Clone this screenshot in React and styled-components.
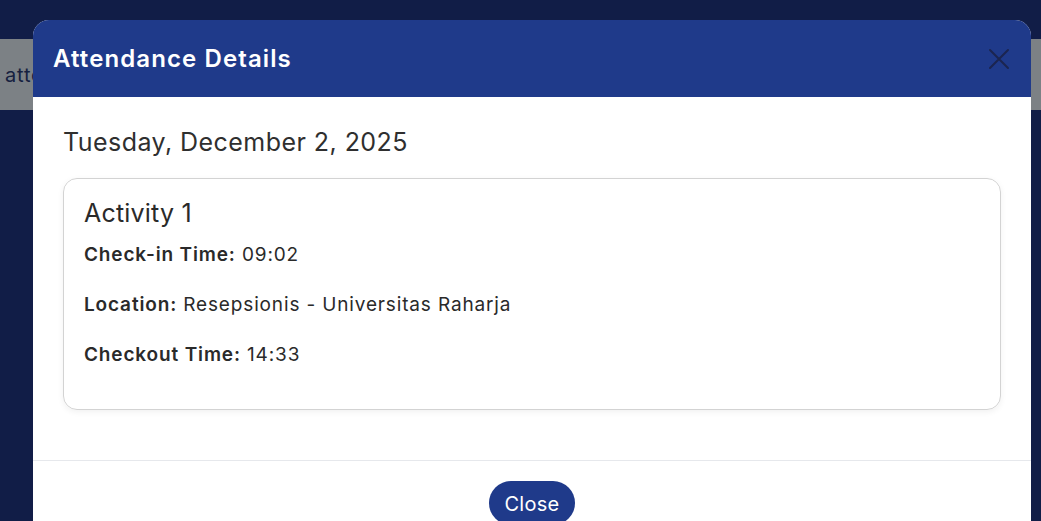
import styled, { createGlobalStyle } from 'styled-components';

const GlobalStyle = createGlobalStyle`
    html, body {
        margin: 0;
        padding: 0;
        height: 100%;
        overflow: hidden;
        background: #111d47;
        font-family: Inter, "Open Sans", sans-serif;
    }
`;

let Backdrop = styled.div`
    position: relative;
    width: 100%;
    height: 100vh;
    padding-top: 39px;
    box-sizing: border-box;
    background: #111d47;
`;

let PageBar = styled.div`
    height: 71px;
    background: #7c8185;
    display: flex;
    align-items: center;
    padding-left: 5px;
    font-size: 20px;
    letter-spacing: 0.8px;
    color: #15203f;
`;

let Modal = styled.div`
    position: absolute;
    top: 20px;
    left: 33px;
    width: 998px;
    background: #fff;
    border-radius: 16px 16px 0 0;
    overflow: hidden;
`;

let Header = styled.header`
    height: 77px;
    background: #1f3a8a;
    display: flex;
    align-items: center;
    justify-content: space-between;
    padding: 0 20px;
`;

let Title = styled.h2`
    margin: 0;
    color: #fff;
    font-size: 24px;
    font-weight: 600;
    letter-spacing: 1.1px;
`;

let CloseIcon = styled.button`
    border: 0;
    background: none;
    padding: 0;
    width: 24px;
    height: 24px;
    display: flex;
    align-items: center;
    justify-content: center;
    cursor: pointer;
`;

let Body = styled.div`
    padding: 31px 30px 50px;
`;

let DateLine = styled.h3`
    margin: 0 0 21px;
    font-size: 25px;
    font-weight: 400;
    line-height: 29px;
    letter-spacing: 0.45px;
    color: #2f2f2f;
`;

let Card = styled.div`
    border: 1px solid #d3d3d3;
    border-radius: 14px;
    box-shadow: 0 2px 6px rgba(0, 0, 0, 0.06);
    padding: 20px;
`;

let CardTitle = styled.h4`
    margin: 0 0 13px;
    font-size: 25px;
    font-weight: 400;
    line-height: 29px;
    letter-spacing: 0.2px;
    color: #2a2a2a;
`;

let Row = styled.p`
    margin: 0 0 23px;
    font-size: 19px;
    line-height: 27px;
    letter-spacing: 0.85px;
    color: #2a2a2a;

    &:last-child {
        margin-bottom: 21px;
    }

    strong {
        font-weight: 600;
    }
`;

let Footer = styled.footer`
    border-top: 1px solid #e6e8ec;
    padding: 20px 0;
    display: flex;
    justify-content: center;
`;

let Button = styled.button`
    background: #1f3a8a;
    color: #fff;
    border: 0;
    border-radius: 22px;
    height: 44px;
    padding: 2px 15px 0;
    font-family: inherit;
    font-size: 20px;
    letter-spacing: 0.3px;
`;

const rows = [
    ['Check-in Time:', '09:02'],
    ['Location:', 'Resepsionis - Universitas Raharja'],
    ['Checkout Time:', '14:33'],
];

function App() {
    return (
        <>
            <GlobalStyle />
            <Backdrop>
                <PageBar>attendance</PageBar>
                <Modal>
                    <Header>
                        <Title>Attendance Details</Title>
                        <CloseIcon aria-label="Close">
                            <svg width="22" height="22" viewBox="0 0 22 22">
                                <path d="M2 2 L20 20 M20 2 L2 20" stroke="#1b2550" strokeWidth="2" strokeLinecap="round" />
                            </svg>
                        </CloseIcon>
                    </Header>
                    <Body>
                        <DateLine>Tuesday, December 2, 2025</DateLine>
                        <Card>
                            <CardTitle>Activity 1</CardTitle>
                            {rows.map(([label, value]) => (
                                <Row key={label}>
                                    <strong>{label}</strong> {value}
                                </Row>
                            ))}
                        </Card>
                    </Body>
                    <Footer>
                        <Button>Close</Button>
                    </Footer>
                </Modal>
            </Backdrop>
        </>
    );
}

export default App;
